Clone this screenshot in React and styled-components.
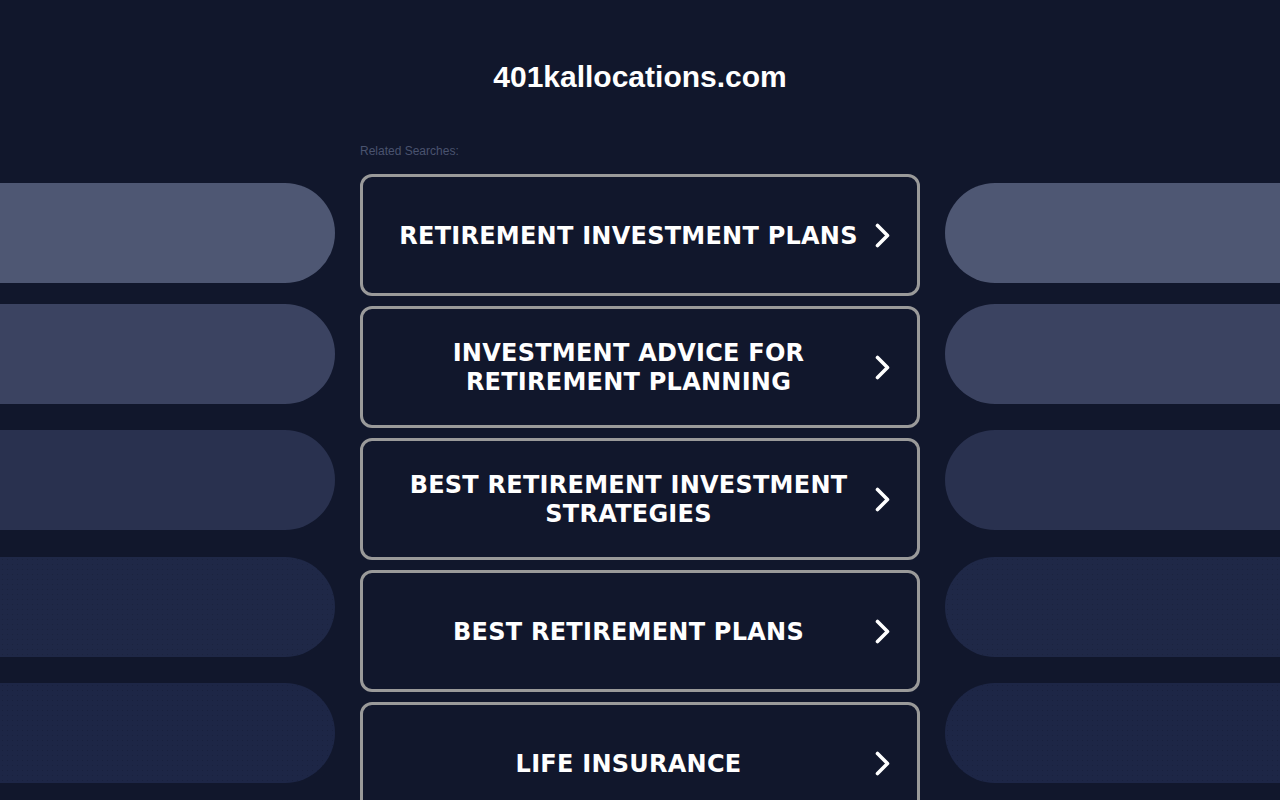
import React from 'react';
import styled, {createGlobalStyle} from "styled-components";

const GlobalStyle = createGlobalStyle`
  html, body {
    margin: 0;
    padding: 0;
    background: #11172c;
    overflow: hidden;
  }
`;

const Page = styled.div`
  width: 1280px;
  height: 800px;
  overflow: hidden;
  background: #11172c;
  font-family: "Liberation Sans", Arial, sans-serif;
`;

const Header = styled.h1`
  margin: 0;
  padding: 60px 0 0;
  height: 89px;
  box-sizing: border-box;
  text-align: center;
  font-size: 30px;
  line-height: 34px;
  font-weight: 700;
  color: #ffffff;
`;

const Layout = styled.div`
  display: grid;
  grid-template-columns: 335px 560px 335px;
  column-gap: 25px;
`;

const Side = styled.div`
  display: flex;
  flex-direction: column;
  padding-top: 94px;
`;

const Pill = styled.div`
  width: 100%;
  height: 100px;
  margin-top: ${({offset}) => offset}px;
  background-color: ${({color}) => color};
  background-image: ${({dotted}) => dotted
    ? "radial-gradient(rgba(0,0,0,0.12) 0.7px, transparent 0.9px)"
    : "none"};
  background-size: 5px 5px;
  border-radius: ${({side}) => side === "right" ? "50px 0 0 50px" : "0 50px 50px 0"};
`;

const Main = styled.div`
  display: flex;
  flex-direction: column;
`;

const Label = styled.div`
  font-size: 12px;
  line-height: 14px;
  color: #4a536f;
  margin: 55px 0 16px;
`;

const List = styled.div`
  display: flex;
  flex-direction: column;
  gap: 10px;
`;

const Item = styled.a`
  box-sizing: border-box;
  height: 122px;
  border: 3px solid #9a9a9a;
  border-radius: 12px;
  display: flex;
  align-items: center;
  padding: 0 27px;
  text-decoration: none;
  color: #ffffff;
`;

const ItemText = styled.span`
  flex: 1;
  text-align: center;
  font-family: "DejaVu Sans", Verdana, sans-serif;
  font-weight: 700;
  font-size: 24px;
  line-height: 29px;
  letter-spacing: 0.25px;
  padding: 2px 8px 0 0;
`;

const Chevron = () => (
  <svg width="15" height="25" viewBox="0 0 15 25" fill="none">
    <polyline points="2.5,2.5 12.5,12.5 2.5,22.5" stroke="#ffffff" strokeWidth="3.6"
              strokeLinecap="round" strokeLinejoin="round"/>
  </svg>
);

const searches = [
  "RETIREMENT INVESTMENT PLANS",
  "INVESTMENT ADVICE FOR RETIREMENT PLANNING",
  "BEST RETIREMENT INVESTMENT STRATEGIES",
  "BEST RETIREMENT PLANS",
  "LIFE INSURANCE",
];

const pills = [
  {color: "#4e5773", offset: 0},
  {color: "#3b4361", offset: 21},
  {color: "#29314f", offset: 26},
  {color: "#1f2847", offset: 27, dotted: true},
  {color: "#1d2646", offset: 26, dotted: true},
];

const App = () => {
  return (
    <Page>
      <GlobalStyle/>
      <Header>401kallocations.com</Header>
      <Layout>
        <Side>
          {pills.map((p, i) => (
            <Pill key={i} side="left" {...p}/>
          ))}
        </Side>
        <Main>
          <Label>Related Searches:</Label>
          <List>
            {searches.map((s) => (
              <Item key={s} href="#">
                <ItemText>{s}</ItemText>
                <Chevron/>
              </Item>
            ))}
          </List>
        </Main>
        <Side>
          {pills.map((p, i) => (
            <Pill key={i} side="right" {...p}/>
          ))}
        </Side>
      </Layout>
    </Page>
  );
};

export default App;
